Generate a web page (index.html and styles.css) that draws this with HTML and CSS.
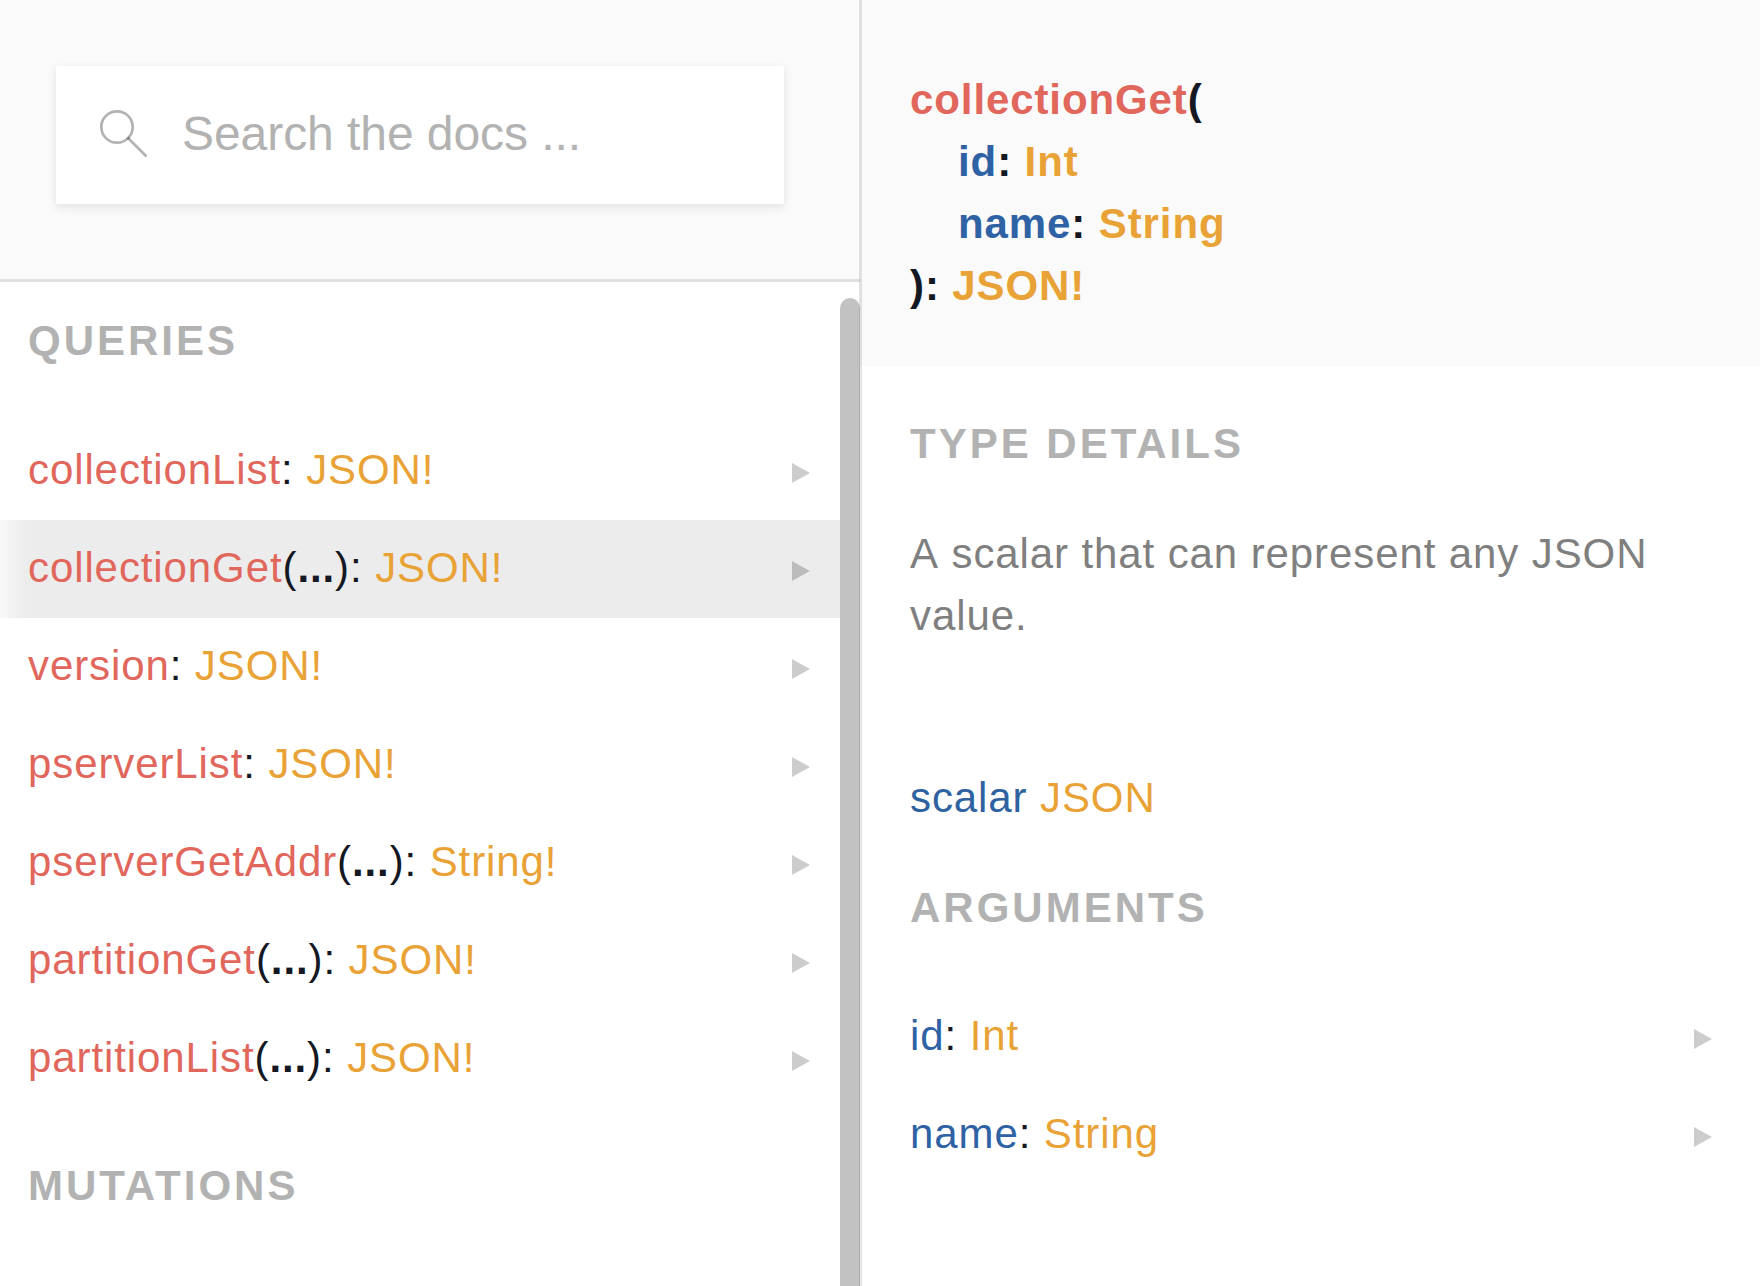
FILE: index.html
```html
<!DOCTYPE html>
<html lang="en">
<head>
<meta charset="utf-8">
<title>Schema docs</title>
<link rel="stylesheet" href="styles.css">
</head>
<body>
<div class="explorer">
  <section class="column column-root">
    <header class="search-area">
      <label class="search-box">
        <svg class="search-icon" viewBox="0 0 50 50" fill="none" stroke="#000" stroke-opacity="0.3" stroke-width="2.7"><circle cx="18" cy="18" r="15.700"/><path d="M28.500 28.500L47.500 47.500"/></svg>
        <input class="search-input" type="text" placeholder="Search the docs ...">
      </label>
    </header>
    <div class="root-list">
      <h2 class="title">QUERIES</h2>
      <div class="row"><span class="text"><span class="field">collectionList</span>: <span class="type">JSON!</span></span><i class="arrow"></i></div>
      <div class="row active"><span class="text"><span class="field">collectionGet</span>(<b>...</b>): <span class="type">JSON!</span></span><i class="arrow"></i></div>
      <div class="row"><span class="text"><span class="field">version</span>: <span class="type">JSON!</span></span><i class="arrow"></i></div>
      <div class="row"><span class="text"><span class="field">pserverList</span>: <span class="type">JSON!</span></span><i class="arrow"></i></div>
      <div class="row"><span class="text"><span class="field">pserverGetAddr</span>(<b>...</b>): <span class="type">String!</span></span><i class="arrow"></i></div>
      <div class="row"><span class="text"><span class="field">partitionGet</span>(<b>...</b>): <span class="type">JSON!</span></span><i class="arrow"></i></div>
      <div class="row"><span class="text"><span class="field">partitionList</span>(<b>...</b>): <span class="type">JSON!</span></span><i class="arrow"></i></div>
      <h2 class="title title-mutations">MUTATIONS</h2>
    </div>
    <div class="scroll-thumb"></div>
    <div class="divider"></div>
  </section>
  <section class="column column-detail">
    <header class="signature">
      <div><span class="field">collectionGet</span>(</div>
      <div class="arg"><span class="name">id</span>: <span class="type">Int</span></div>
      <div class="arg"><span class="name">name</span>: <span class="type">String</span></div>
      <div>): <span class="type">JSON!</span></div>
    </header>
    <h2 class="title">TYPE DETAILS</h2>
    <p class="description">A scalar that can represent any JSON value.</p>
    <div class="definition"><span class="keyword">scalar</span> <span class="type">JSON</span></div>
    <h2 class="title title-arguments">ARGUMENTS</h2>
    <div class="row"><span class="text"><span class="name">id</span>: <span class="type">Int</span></span><i class="arrow"></i></div>
    <div class="row"><span class="text"><span class="name">name</span>: <span class="type">String</span></span><i class="arrow"></i></div>
  </section>
</div>
</body>
</html>
```
FILE: styles.css
```css
* { box-sizing: border-box; }

body {
  margin: 0;
  background: #fff;
  color: #141823;
  font: 42px/62px "Liberation Sans", Arial, sans-serif;
  letter-spacing: 0.9px;
}

.explorer {
  display: flex;
  height: 1286px;
  overflow: hidden;
}

.column { position: relative; }
.column-root { width: 860px; flex: none; }
.column-detail { flex: 1; }

.search-area {
  height: 282px;
  padding: 66px 76px 0 56px;
  background: #fafafa;
  border-bottom: 3px solid #e0e0e0;
}

.search-box {
  display: flex;
  align-items: center;
  height: 138px;
  padding: 0 0 2px 43px;
  background: #fff;
  box-shadow: 0 3px 9px rgba(0, 0, 0, 0.1);
}

.search-icon {
  width: 50px;
  height: 50px;
  flex: none;
}

.search-input {
  flex: 1;
  min-width: 0;
  margin-left: 33px;
  padding: 0;
  border: 0;
  outline: 0;
  background: none;
  font: 48px/60px "Liberation Sans", Arial, sans-serif;
  letter-spacing: -0.06px;
}
.search-input::placeholder { color: #b2b2b2; }

.root-list { padding-right: 20px; }

.title {
  margin: 0;
  padding: 28px 28px 50px;
  font-size: 42px;
  line-height: 62px;
  letter-spacing: 3px;
  color: #b2b2b2;
}
.title-mutations { padding-top: 47px; }

.row {
  display: flex;
  align-items: center;
  justify-content: space-between;
  height: 98px;
  padding: 0 30px 0 28px;
}
.row.active {
  background: linear-gradient(to right, #f8f8f8, #ececec 26px);
}

.text { margin-top: -2px; }

.arrow {
  margin-top: 4px;
  border-left: 18px solid rgba(0, 0, 0, 0.2);
  border-top: 10px solid transparent;
  border-bottom: 10px solid transparent;
}

.field { color: #e1665b; }
.type { color: #e9a236; }
.name { color: #2e62a5; }
.keyword { color: #2e62a0; }

.scroll-thumb {
  position: absolute;
  top: 298px;
  left: 840px;
  width: 20px;
  height: 1100px;
  border-radius: 10px;
  background: #c2c2c2;
}

.divider {
  position: absolute;
  z-index: 1;
  top: 0;
  left: 859px;
  width: 3px;
  height: 1286px;
  background: rgba(0, 0, 0, 0.1);
}

.signature {
  height: 366px;
  padding: 69px 50px 0;
  background: #fafafa;
  font-weight: bold;
}
.arg { padding-left: 48px; }

.column-detail .title { padding: 47px 50px 48px; }
.column-detail .row { padding: 0 48px 0 50px; }

.description {
  margin: 0;
  padding: 0 50px;
  color: #7f7f7f;
  font-kerning: none;
}

.definition { padding: 120px 50px 0; }

.column-detail .title-arguments { padding: 48px 50px 49px; }
```
